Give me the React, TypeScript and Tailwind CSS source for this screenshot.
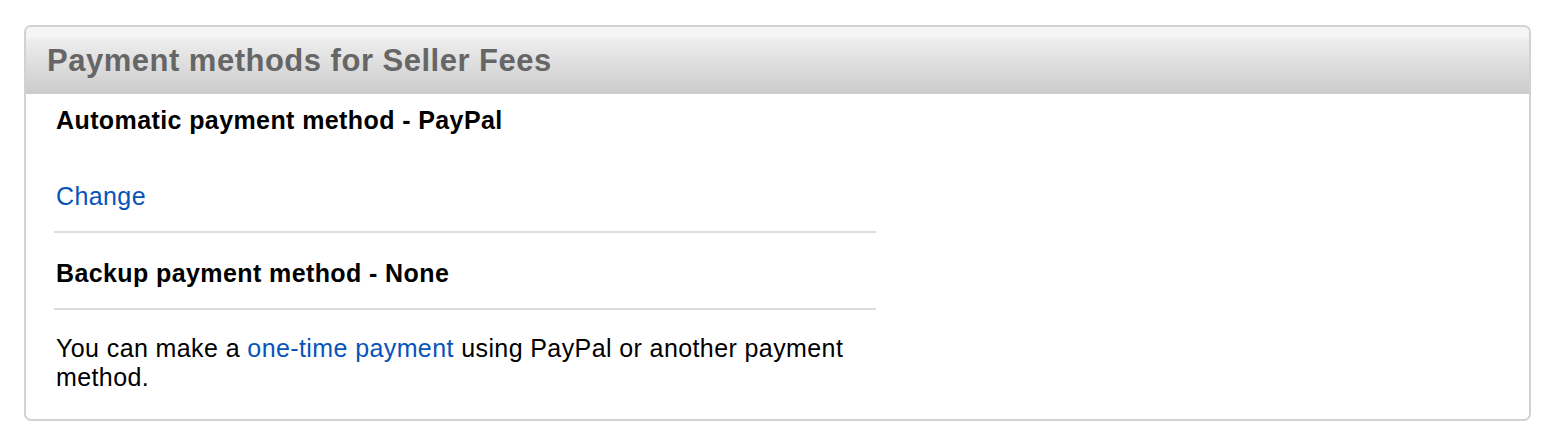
export default function App() {
  return (
    <div className="bg-white min-h-[442px] pt-[25px] pl-[24px] pr-[21px] font-['Liberation_Sans',Arial,sans-serif]">
      <div className="border-2 border-[#d2d2d2] rounded-[7px] overflow-hidden">
        {/* Header */}
        <div className="h-[67px] bg-[linear-gradient(to_bottom,#f5f5f5_0px,#f5f5f5_10px,#eeeeee_12px,#cbcbcb_100%)] flex items-center px-[21px]">
          <h2 className="text-[31px] tracking-[0.5px] font-bold text-[#666666] leading-none">Payment methods for Seller Fees</h2>
        </div>

        {/* Body */}
        <div className="pl-[28px] pb-[27px]">
          <div className="w-[822px] text-[25px] tracking-[0.4px] text-black">
            <div className="pl-[2px] pt-[12px] pb-[21px] border-b-2 border-[#dddddd]">
              <p className="font-bold leading-[28px]">Automatic payment method - PayPal</p>
              <a href="#" className="block mt-[48px] text-[#0654ba] leading-[28px]">Change</a>
            </div>
            <div className="pl-[2px] pt-[26px] pb-[21px] border-b-2 border-[#dddddd]">
              <p className="font-bold leading-[28px]">Backup payment method - None</p>
            </div>
            <p className="pl-[2px] pt-[24px] pr-[16px] leading-[29px]">
              You can make a <a href="#" className="text-[#0654ba]">one-time payment</a> using PayPal or another payment method.
            </p>
          </div>
        </div>
      </div>
    </div>
  );
}
